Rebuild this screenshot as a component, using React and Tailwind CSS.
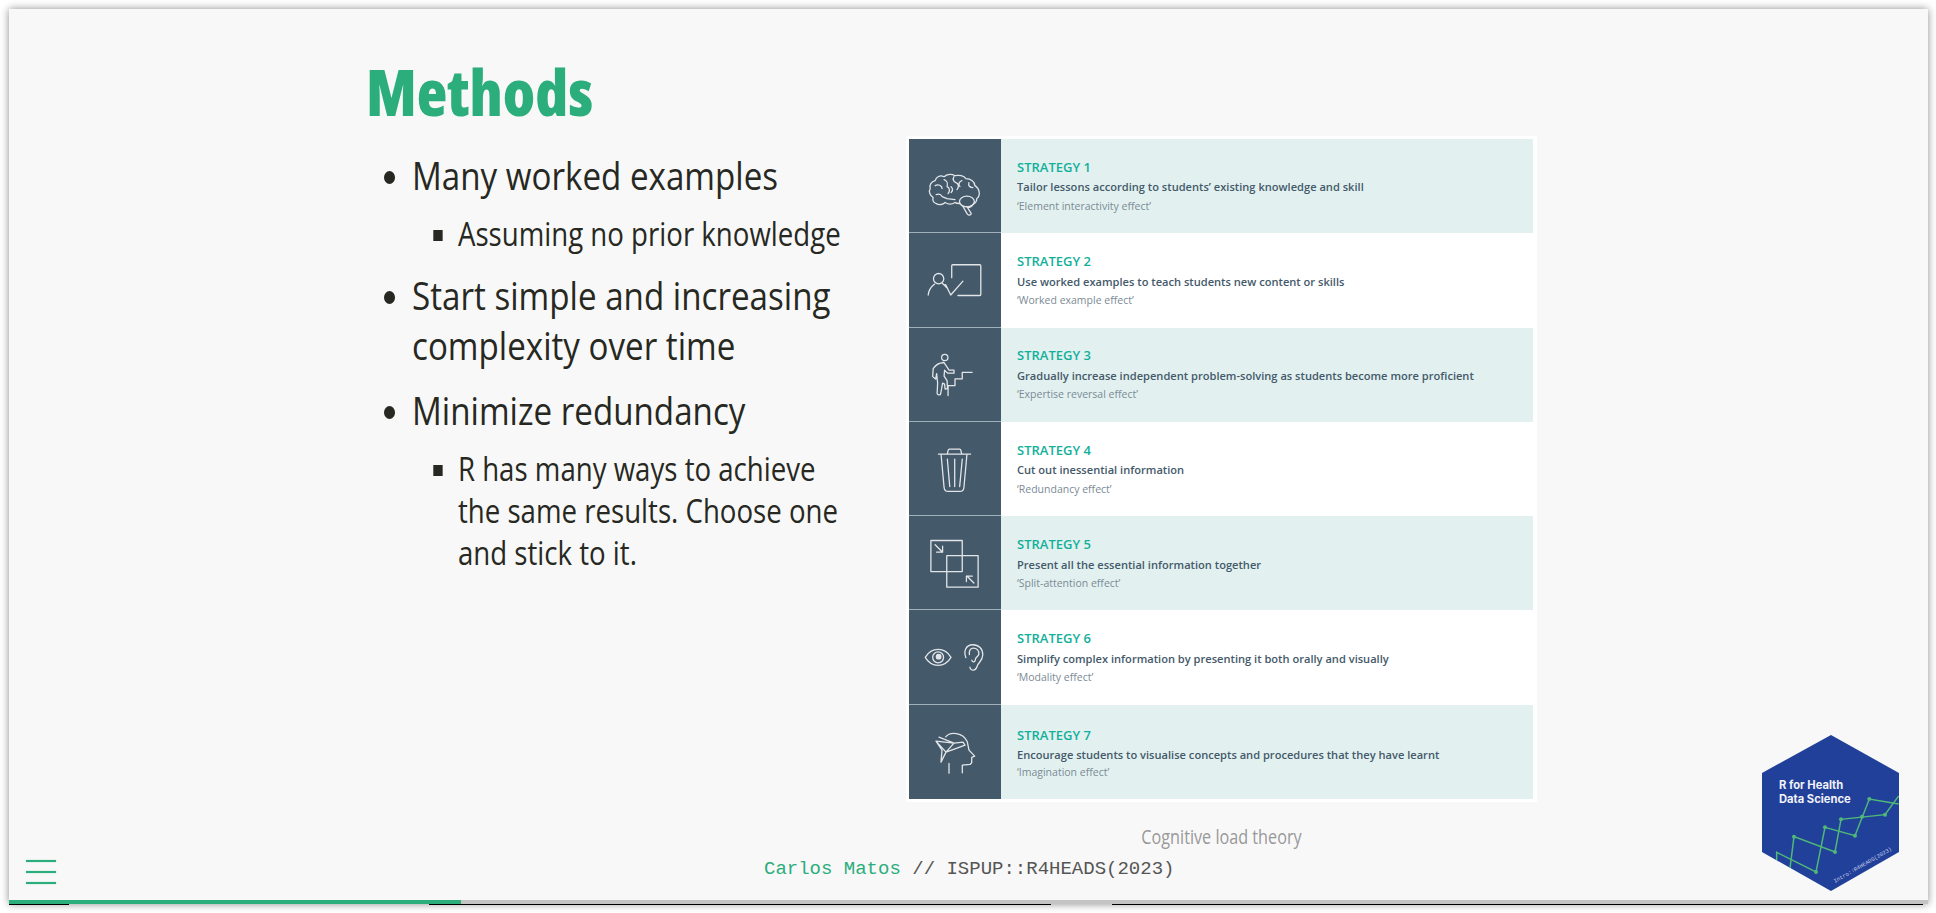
const rows = [
  { title: 'STRATEGY 1', text: 'Tailor lessons according to students’ existing knowledge and skill', note: '‘Element interactivity effect’' },
  { title: 'STRATEGY 2', text: 'Use worked examples to teach students new content or skills', note: '‘Worked example effect’' },
  { title: 'STRATEGY 3', text: 'Gradually increase independent problem-solving as students become more proficient', note: '‘Expertise reversal effect’' },
  { title: 'STRATEGY 4', text: 'Cut out inessential information', note: '‘Redundancy effect’' },
  { title: 'STRATEGY 5', text: 'Present all the essential information together', note: '‘Split-attention effect’' },
  { title: 'STRATEGY 6', text: 'Simplify complex information by presenting it both orally and visually', note: '‘Modality effect’' },
  { title: 'STRATEGY 7', text: 'Encourage students to visualise concepts and procedures that they have learnt', note: '‘Imagination effect’' },
];

const icons = [
  <g key="brain">
    <path d="M27 65c-3-1-4-4-3-6-3-2-5-6-3-9-1-4 1-7 5-8 1-4 5-6 9-4 3-3 8-3 11-1 4-1 9 0 11 3 5 0 9 3 9 7 5 3 6 10 2 13 0 3-2 5-4 6-1 2-3 3-5 3" />
    <path d="M27 65c3 2 7 1 9-1 3 2 7 2 10 0 1 1 3 1 5 1" />
    <ellipse cx="58" cy="63" rx="7.500" ry="5.500" />
    <path d="M54 68l4 7c1 2 3 2 4 1 1-1 0-2-1-3l-3-5" />
    <path d="M26 47c3-2 7 0 7 3M35 41c3 1 4 4 3 7 3 1 3 5 1 7M45 38c-2 3 0 5 2 6 3 1 3 5 1 7M53 42c-3 1-4 4-2 6M60 44c-1 3 1 5 4 5M27 56c3-1 5 0 6 2l5 2 8 1M42 48c2 2 2 4 0 6" />
  </g>,
  <g key="board">
    <path d="M42.700 45V33a1 1 0 0 1 1-1H71a1 1 0 0 1 1 1v29a1 1 0 0 1-1 1H49" />
    <path d="M36.500 52l5.200 10.500L54 48.500" />
    <circle cx="29.500" cy="46" r="5.200" />
    <path d="M19 62.500c.5-5 2.500-8 6.500-11M33.500 51c1.500 1 3 2.500 4 4" />
  </g>,
  <g key="stairs">
    <path d="M39 68V58h7v-6.700h7.300v-6.600h10" />
    <circle cx="35.700" cy="29.700" r="3.200" />
    <path d="M34 35c-4 0-8 3-10 6l-.5 8 3 2.500 1-5.500 1 9.500L28 66c0 1.500 3 2 3.500.5l2-11 2 1 .5 5 2.500-.5-.5-8-3-4.500.5-6 3 3h6.500v-3h-5l-4-6c-.5-1-1.500-2-2-2z" />
  </g>,
  <g key="trash">
    <path d="M29.300 32.300h32.400M38.300 32l.8-3.500a1.500 1.500 0 0 1 1.400-1.200h10a1.500 1.500 0 0 1 1.400 1.200l.8 3.500" />
    <path d="M32 33l3 33q.4 4 4 4h12q3.600 0 4-4l3-33" />
    <path d="M38.300 37.500l2.400 27.500M45.700 37.500V65M53.300 37.500L50.700 65" />
  </g>,
  <g key="split">
    <rect x="21.700" y="24.700" width="31.600" height="31.300" />
    <rect x="37.700" y="40" width="31.600" height="31.700" />
    <path d="M26 29l7 7M33.500 30.500V36.500H27.500M65 67.500l-7-7M57.500 66V60.500H63.500" />
  </g>,
  <g key="eye-ear">
    <path d="M16 47.700c3-5 8-8 13-8s10 3 13 8c-3 5-8 8-13 8s-10-3-13-8z" />
    <circle cx="29" cy="47.700" r="5.500" />
    <circle cx="29.500" cy="47" r="2.300" fill="white" />
    <path d="M57 48c-2.500-6-.5-13 7-13 6 0 10 4 10 10 0 5-3 7-5 10-1 2-1 5-4 5.500-2 .3-4-1-4-3" />
    <path d="M60.500 45c-.5-4 1-6.500 4-6.500 3.500 0 6 2.500 5.500 6-.3 2-2 2.500-3 4-.8 1.300 0 2.500-1.500 3.500-1.500.8-2.500-.5-2.500-1.500" />
  </g>,
  <g key="head">
    <path d="M40 68V58.300M36.700 31.700C41 26 54 27 58.300 36.700L60 45l5.700 6-3 1.300v5.400L61 59.300l-7.700.7v7.700" />
    <path d="M27 36l18 2 9-1 2 3-8 3-11 4-5 10 1-12zM30 32l15 6M27 36l10 11 11-4M45 38l-8 9" />
  </g>,
];

function StrategyRow({ row, icon, shaded, last }) {
  return (
    <div className="flex min-h-0 flex-1">
      <div className={`w-[92px] shrink-0 bg-[#44596a] ${last ? '' : 'border-b border-[#9fb0ba]'}`}>
        <svg viewBox="0 0 92 94" className="h-full w-full" fill="none" stroke="white" strokeWidth="1.300" strokeLinecap="round" strokeLinejoin="round" opacity="0.85">
          {icon}
        </svg>
      </div>
      <div className={`flex flex-1 flex-col justify-center pl-[16px] pt-[2px] ${shaded ? 'bg-[#e2f1f0]' : 'bg-white'}`}>
        <div className="text-[13px] leading-[19.500px] font-semibold text-[#12b09b] font-['Open_Sans',sans-serif]">{row.title}</div>
        <div className="text-[11.100px] leading-[19.500px] font-semibold text-[#44596a] font-['Open_Sans',sans-serif]">{row.text}</div>
        <div className={`text-[10.500px] text-[#7b8a95] font-['Open_Sans',sans-serif] ${last ? 'leading-[15px]' : 'leading-[19.500px]'}`}>{row.note}</div>
      </div>
    </div>
  );
}

function HexLogo() {
  return (
    <svg viewBox="0 0 137 156" className="absolute left-[1762px] top-[735px] h-[156px] w-[137px]">
      <defs>
        <clipPath id="hex"><polygon points="69,0 137,38 137,117 69,156 0,117 0,38" /></clipPath>
      </defs>
      <polygon points="69,0 137,38 137,117 69,156 0,117 0,38" fill="#21409a" />
      <g clipPath="url(#hex)">
        <g transform="translate(-22 -15) scale(0.3333)" fill="none" stroke="#4fb878" strokeWidth="4.500">
          <path d="M110 420V397L228 456L255 322L345 347L388 237L476 252" />
          <path d="M150 445L162 350L285 396L303 298L435 284L476 228" />
          <g fill="#4fb878" stroke="none">
            <circle cx="228" cy="456" r="6" />
            <circle cx="255" cy="322" r="6" />
            <circle cx="345" cy="347" r="6" />
            <circle cx="388" cy="237" r="6" />
            <circle cx="162" cy="350" r="6" />
            <circle cx="285" cy="396" r="6" />
            <circle cx="303" cy="298" r="6" />
            <circle cx="366" cy="290" r="6" />
            <circle cx="435" cy="284" r="6" />
          </g>
        </g>
      </g>
      <text x="17" y="54" fill="#f0f2f8" fontSize="11.200" fontWeight="700" fontFamily="Inter, sans-serif">R for Health</text>
      <text x="17" y="68" fill="#f0f2f8" fontSize="11.200" fontWeight="700" fontFamily="Inter, sans-serif">Data Science</text>
      <text x="73" y="148" transform="rotate(-30 73 148)" fill="#c7d0e8" fontSize="5.500" fontFamily="'Liberation Mono', monospace">Intro::R4HEADS(2023)</text>
    </svg>
  );
}

export default function App() {
  return (
    <div className="relative h-[913px] w-[1936px] overflow-hidden bg-white">
      <div className="absolute left-[9px] top-[9px] h-[895px] w-[1919px] bg-[#f8f8f8] shadow-[0_0_8px_rgba(0,0,0,0.45)]" />
      <div className="relative flex pl-[367px] pt-[52px]">
        <div className="w-[480px] font-['Open_Sans',sans-serif]">
          <h1 className="-ml-[1px] text-[63px] leading-[80px] font-extrabold text-[#2bad7c] [font-stretch:75%]">Methods</h1>
          {/* only normal and condensed faces exist, so narrow the normal one to the slide's width */}
          <ul className="mt-[18px] w-[567px] origin-left scale-x-[0.85] list-disc pl-[53px] text-[39px] leading-[50px] text-[#272822] marker:text-[37px]">
            <li>Many worked examples
              <ul className="mt-[13px] list-[square] pl-[54px] text-[32.500px] leading-[42px] [&>li]:marker:text-[32px]"><li>Assuming no prior knowledge</li></ul>
            </li>
            <li className="mt-[15px]">Start simple and increasing complexity over time</li>
            <li className="mt-[15px]">Minimize redundancy
              <ul className="mt-[13px] list-[square] pl-[54px] text-[32.500px] leading-[42px] [&>li]:marker:text-[32px]"><li>R has many ways to achieve the same results. Choose one and stick to it.</li></ul>
            </li>
          </ul>
        </div>
        <div className="ml-[59px] mt-[84px] w-[631px]">
          <div className="flex h-[666px] flex-col border-[3px] border-r-[4px] border-white">
            {rows.map((row, i) => (
              <StrategyRow key={row.title} row={row} icon={icons[i]} shaded={i % 2 === 0} last={i === 6} />
            ))}
          </div>
          <div className="mt-[23px] scale-x-[0.81] text-center text-[20px] leading-[24px] text-[#999999] font-['Open_Sans',sans-serif]">Cognitive load theory</div>
        </div>
      </div>

      <div className="absolute left-[26px] top-[860px] flex w-[30px] flex-col gap-[9px]">
        <div className="h-[2px] bg-[#2bad7c] shadow-[0_0_1px_#2bad7c]" />
        <div className="h-[2px] bg-[#2bad7c] shadow-[0_0_1px_#2bad7c]" />
        <div className="h-[2px] bg-[#2bad7c] shadow-[0_0_1px_#2bad7c]" />
      </div>

      <div className="absolute left-[764px] top-[857px] text-[19px] leading-[24px] text-[#555555] font-['Liberation_Mono',monospace]">
        <span className="text-[#2bad7c]">Carlos Matos</span> // ISPUP::R4HEADS(2023)
      </div>

      <HexLogo />

      <div className="absolute left-[9px] top-[900px] h-[4px] w-[1919px] bg-[#c4c4c4]">
        <div className="h-full w-[452px] bg-[#2bad7c]" />
        <div className="absolute left-0 top-[4px] h-px w-[60px] bg-black" />
        <div className="absolute left-[420px] top-[4px] h-px w-[622px] bg-black" />
        <div className="absolute left-[1103px] top-[4px] h-px w-[811px] bg-black" />
      </div>
    </div>
  );
}
